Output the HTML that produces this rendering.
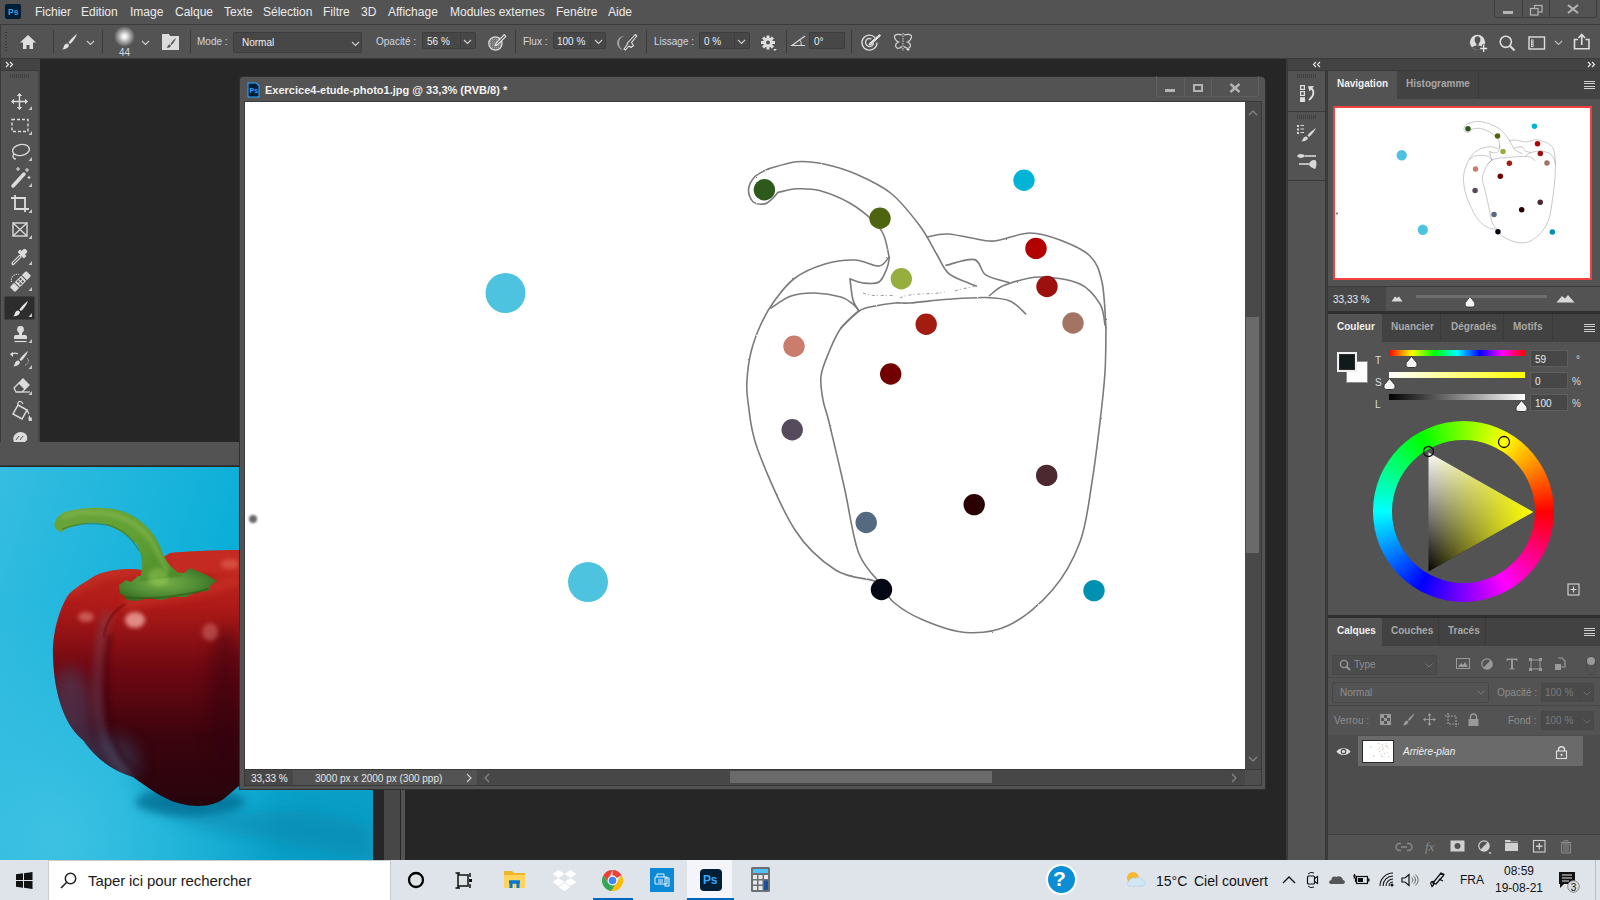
<!DOCTYPE html>
<html><head><meta charset="utf-8">
<style>
*{box-sizing:border-box;margin:0;padding:0}
html,body{width:1600px;height:900px;overflow:hidden;background:#262626;font-family:"Liberation Sans",sans-serif;}
.a{position:absolute}
.t{position:absolute;white-space:nowrap;line-height:1}
#menu{left:0;top:0;width:1600px;height:24px;background:#535353}
#menu .t{font-size:12px;color:#ececec;top:6px}
#opt{left:0;top:24px;width:1600px;height:35px;background:#535353;border-top:1px solid #3b3b3b;border-bottom:1px solid #3b3b3b;box-shadow:inset 1px 0 0 #3f3f3f}
.sep{position:absolute;width:1px;background:#3a3a3a}
.lbl{font-size:10px;color:#d2d8e0}
.box{position:absolute;background:#474747;border:1px solid #3d3d3d;border-radius:2px}
.ico{position:absolute;overflow:visible}
</style></head><body>
<!--SYM--><svg width="0" height="0" style="position:absolute"><defs>
<filter id="rough" x="-5%" y="-5%" width="110%" height="110%"><feTurbulence type="fractalNoise" baseFrequency="0.8" numOctaves="2" seed="3"/><feDisplacementMap in="SourceGraphic" scale="1.6"/></filter>
<filter id="dotbl" x="-100%" y="-100%" width="300%" height="300%"><feGaussianBlur stdDeviation="1.2"/></filter>
<symbol id="art" viewBox="0 0 1000 667">
<g fill="none" stroke="#5a5a5a" stroke-width="1.6" stroke-linecap="round" opacity=".8" filter="url(#rough)">
<path d="M523.4 66.9C528.1 65.7 542.3 60.5 551.7 59.7C561.1 58.9 569.9 60.1 580.0 62.2C590.1 64.3 601.2 67.7 612.2 72.6C623.2 77.5 635.8 83.0 646.2 91.5C656.6 100.0 667.0 113.5 674.6 123.6C682.2 133.7 686.9 144.1 691.6 152.0C696.3 159.9 698.0 166.2 703.0 170.9C708.0 175.6 717.1 178.1 721.8 180.3C726.5 182.5 729.7 183.4 731.3 184.0"/>
<path d="M523.4 66.9C521.2 68.2 513.3 71.0 510.0 74.5C506.7 78.0 503.8 83.5 503.5 87.7C503.2 92.0 505.5 97.6 508.2 100.0C510.9 102.4 516.5 102.4 519.6 101.9C522.7 101.4 524.8 98.9 527.0 97.0C529.2 95.1 531.8 91.6 532.8 90.5"/>
<path d="M532.8 90.5C535.9 89.9 544.8 87.1 551.7 86.8C558.6 86.5 565.6 86.2 574.4 88.6C583.2 91.0 595.8 96.1 604.6 101.0C613.4 105.9 621.6 112.7 627.3 118.0C633.0 123.3 635.9 126.7 638.7 133.0C641.5 139.3 643.4 152.0 644.3 155.8"/>
<path d="M644.0 155.0C642.3 156.5 639.7 163.5 634.0 164.0C628.3 164.5 619.0 158.3 610.0 158.0C601.0 157.7 590.0 159.0 580.0 162.0C570.0 165.0 558.3 170.0 550.0 176.0C541.7 182.0 535.7 190.3 530.0 198.0C524.3 205.7 520.0 213.3 516.0 222.0C512.0 230.7 508.3 240.7 506.0 250.0C503.7 259.3 502.5 269.7 502.0 278.0C501.5 286.3 501.2 288.5 503.0 300.0C504.8 311.5 504.7 325.7 512.5 347.0C520.3 368.3 537.0 407.8 550.0 428.0C563.0 448.2 577.5 459.6 590.5 468.0C603.5 476.4 620.3 476.0 628.0 478.5C635.7 481.0 635.3 482.2 636.8 483.0"/>
<path d="M605.0 177.0C607.2 177.7 613.2 180.5 618.0 181.0C622.8 181.5 630.0 182.5 634.0 180.0C638.0 177.5 640.3 170.0 642.0 166.0C643.7 162.0 643.9 157.5 644.3 155.8"/>
<path d="M605.0 177.0C605.5 180.5 606.5 192.7 608.0 198.0C609.5 203.3 613.0 207.2 614.0 209.0"/>
<path d="M526.0 206.0C529.3 204.0 538.7 196.5 546.0 194.0C553.3 191.5 561.7 190.8 570.0 191.0C578.3 191.2 589.7 193.2 596.0 195.0C602.3 196.8 605.0 199.7 608.0 202.0C611.0 204.3 613.0 207.8 614.0 209.0"/>
<path d="M596.0 226.0C599.0 223.2 608.3 212.7 614.0 209.0C619.7 205.3 624.0 205.3 630.0 204.0C636.0 202.7 644.2 201.5 650.0 201.0C655.8 200.5 656.2 201.6 665.0 201.0C673.8 200.4 690.4 198.2 703.0 197.3C715.6 196.4 730.4 195.2 740.7 195.5C751.0 195.8 758.3 196.2 765.0 199.0C771.7 201.8 778.2 209.8 780.8 212.0"/>
<path d="M701.0 163.3C705.7 162.4 722.8 156.0 729.4 157.6C736.0 159.2 735.0 169.0 740.7 172.8C746.4 176.6 759.6 179.1 763.4 180.3"/>
<path d="M682.0 135.0C685.5 134.5 693.2 131.4 703.0 132.0C712.8 132.6 732.0 137.7 740.7 138.7C749.4 139.7 747.6 139.3 755.0 138.0C762.4 136.7 775.0 131.0 785.0 131.0C795.0 131.0 805.0 134.2 815.0 138.0C825.0 141.8 838.0 147.0 845.0 154.0C852.0 161.0 854.3 168.0 857.0 180.0C859.7 192.0 860.3 218.3 861.0 226.0"/>
<path d="M744.5 193.6C747.1 191.8 751.6 186.1 760.0 183.0C768.4 179.9 782.5 175.2 795.0 175.0C807.5 174.8 825.0 177.5 835.0 182.0C845.0 186.5 850.8 195.2 855.0 202.0C859.2 208.8 859.2 219.5 860.0 223.0"/>
<path d="M614.0 209.0C611.0 211.8 601.0 219.2 596.0 226.0C591.0 232.8 587.3 242.0 584.0 250.0C580.7 258.0 577.0 266.0 576.0 274.0C575.0 282.0 576.7 290.3 578.0 298.0C579.3 305.7 580.5 305.6 584.0 320.0C587.5 334.4 594.2 362.9 599.2 384.7C604.2 406.5 607.4 434.6 613.7 451.0C620.0 467.4 632.9 477.7 636.8 483.0"/>
<path d="M636.8 483.0C638.7 485.8 641.6 494.2 648.3 500.0C655.0 505.8 665.0 512.4 677.0 517.5C689.0 522.6 706.0 529.5 720.5 530.5C735.0 531.5 749.4 530.3 763.8 523.3C778.2 516.3 795.1 502.5 807.0 488.6C818.9 474.7 828.3 458.1 835.0 440.0C841.7 421.9 843.7 400.0 847.0 380.0C850.3 360.0 852.8 338.3 855.0 320.0C857.2 301.7 859.0 285.7 860.0 270.0C861.0 254.3 860.8 233.3 861.0 226.0"/>
</g>
<g fill="none" stroke="#9a9a9a" stroke-width="1" stroke-dasharray="3 2 1 3">
<path d="M618 191C630 196 640 192 650 194M655 196C665 190 690 193 700 190M710 189C718 186 725 186 731 184"/>
</g>
<circle cx="260.5" cy="191" r="20" fill="#4ec3e0"/>
<circle cx="343" cy="480" r="20" fill="#4ec3e0"/>
<circle cx="779" cy="78.2" r="10.7" fill="#00b4d6"/>
<circle cx="519.4" cy="87.8" r="10.7" fill="#2d5a1b"/>
<circle cx="635" cy="116.2" r="10.7" fill="#4f6410"/>
<circle cx="656.3" cy="176.7" r="10.7" fill="#95ae3e"/>
<circle cx="791" cy="146.4" r="10.7" fill="#b20000"/>
<circle cx="802" cy="184.5" r="10.7" fill="#9c1010"/>
<circle cx="828" cy="221" r="10.7" fill="#a37464"/>
<circle cx="681.2" cy="222.2" r="10.7" fill="#a21c10"/>
<circle cx="549" cy="244.2" r="10.7" fill="#ca7d6c"/>
<circle cx="645.7" cy="272" r="10.7" fill="#730000"/>
<circle cx="547.2" cy="327.8" r="10.7" fill="#564a5d"/>
<circle cx="801.7" cy="373.4" r="10.7" fill="#4c2830"/>
<circle cx="729.2" cy="402.6" r="10.7" fill="#2a0002"/>
<circle cx="621.2" cy="420.5" r="10.7" fill="#546a80"/>
<circle cx="636.5" cy="487.5" r="10.7" fill="#050714"/>
<circle cx="849" cy="488.6" r="10.7" fill="#0090b2"/>
<circle cx="8" cy="417" r="4" fill="#505050" opacity=".85" filter="url(#dotbl)"/>
</symbol></defs></svg><!--/SYM-->

<!-- MENU BAR -->
<div id="menu" class="a">
  <div class="a" style="left:5px;top:4px;width:16px;height:15px;background:#001e36;border-radius:2px"></div>
  <div class="t" style="left:8px;top:6.5px;font-size:9.5px;font-weight:bold;color:#31a8ff;transform:scaleX(.9);transform-origin:0 0">Ps</div>
  <div class="t" style="left:35px">Fichier</div>
  <div class="t" style="left:81px">Edition</div>
  <div class="t" style="left:130px">Image</div>
  <div class="t" style="left:175px">Calque</div>
  <div class="t" style="left:224px">Texte</div>
  <div class="t" style="left:263px">Sélection</div>
  <div class="t" style="left:323px">Filtre</div>
  <div class="t" style="left:361px">3D</div>
  <div class="t" style="left:388px">Affichage</div>
  <div class="t" style="left:450px">Modules externes</div>
  <div class="t" style="left:556px">Fenêtre</div>
  <div class="t" style="left:608px">Aide</div>
  <div class="a" style="left:1494px;top:-2px;width:103px;height:20px;border:1px solid #3e3e3e;border-radius:0 0 3px 3px"></div>
  <div class="a" style="left:1522px;top:0;width:1px;height:18px;background:#3e3e3e"></div>
  <div class="a" style="left:1549px;top:0;width:1px;height:18px;background:#3e3e3e"></div>
  <div class="a" style="left:1503px;top:11px;width:10px;height:3px;background:#b4b4b4"></div>
  <svg class="ico" style="left:1530px;top:5px" width="13" height="11"><rect x="4.5" y="0.5" width="7.5" height="6.5" fill="none" stroke="#b4b4b4" stroke-width="1.2"/><rect x="0.5" y="3.5" width="7.5" height="6.5" fill="#535353" stroke="#b4b4b4" stroke-width="1.2"/></svg>
  <svg class="ico" style="left:1567px;top:4px" width="12" height="10"><path d="M1 1L11 9M11 1L1 9" stroke="#b4b4b4" stroke-width="2"/></svg>
</div>

<!-- OPTIONS BAR -->
<div id="opt" class="a">
  <div class="a" style="left:5px;top:7px;width:2px;height:19px;background-image:repeating-linear-gradient(#3a3a3a 0 1px,transparent 1px 3px)"></div>
  <svg class="ico" style="left:19px;top:9px" width="18" height="16"><path d="M9 1L1 8.5H4V15H7.5V11H10.5V15H14V8.5H17Z" fill="#e0e0e0"/></svg>
  <div class="sep" style="left:53px;top:5px;height:23px"></div>
  <svg class="ico" style="left:61px;top:8px" width="17" height="17"><path d="M16 1C13 3 9 7 7.5 9.5L9 11C11.5 9 14.5 5 16 1Z" fill="#e0e0e0"/><path d="M6.5 10.5C4 10.5 3 12.5 2.5 14.5C2.2 15.5 1.5 16 1 16.3C4 16.5 7.5 15.5 8 12Z" fill="#e0e0e0"/></svg>
  <svg class="ico" style="left:86px;top:15px" width="9" height="6"><path d="M1 1L4.5 4.5L8 1" fill="none" stroke="#cfcfcf" stroke-width="1.1"/></svg>
  <div class="sep" style="left:102px;top:5px;height:23px"></div>
  <div class="a" style="left:114px;top:1px;width:21px;height:21px;border-radius:50%;background:radial-gradient(circle closest-side,#ffffff 0%,#e8e8e8 22%,#a8a8a8 55%,rgba(83,83,83,0) 100%)"></div>
  <div class="t" style="left:119px;top:23px;font-size:10px;color:#d0d8e4">44</div>
  <svg class="ico" style="left:141px;top:15px" width="9" height="6"><path d="M1 1L4.5 4.5L8 1" fill="none" stroke="#cfcfcf" stroke-width="1.1"/></svg>
  <svg class="ico" style="left:162px;top:8px" width="18" height="18"><path d="M0 1H7L8 3H17V17H0Z" fill="#dcdcdc"/><path d="M14 5C12 6.5 9.5 9 8.5 11L9.5 12C11 10.5 13 8 14 5Z" fill="#535353"/><path d="M8 11.5C6.5 11.5 5.8 12.5 5.5 13.8C5.3 14.5 4.8 14.8 4.5 15C6.5 15 8.5 14.5 9 12.8Z" fill="#535353"/></svg>
  <div class="sep" style="left:190px;top:5px;height:23px"></div>
  <div class="t lbl" style="left:197px;top:12px">Mode :</div>
  <div class="box" style="left:233px;top:7px;width:129px;height:21px"></div>
  <div class="t" style="left:242px;top:13px;font-size:10px;color:#f0f0f0">Normal</div>
  <svg class="ico" style="left:351px;top:16px" width="9" height="6"><path d="M1 1L4.5 4.5L8 1" fill="none" stroke="#cfcfcf" stroke-width="1.1"/></svg>

  <div class="t lbl" style="left:376px;top:12px">Opacité :</div>
  <div class="box" style="left:422px;top:7px;width:54px;height:17px"></div>
  <div class="a" style="left:460px;top:8px;width:1px;height:15px;background:#3d3d3d"></div>
  <div class="t" style="left:427px;top:12px;font-size:10px;color:#e8eef4">56 %</div>
  <svg class="ico" style="left:463px;top:14px" width="9" height="6"><path d="M1 1L4.5 4.5L8 1" fill="none" stroke="#cfcfcf" stroke-width="1.1"/></svg>
  <svg class="ico" style="left:486px;top:8px" width="21" height="19"><defs><pattern id="hatch" width="2" height="2" patternUnits="userSpaceOnUse"><rect width="2" height="2" fill="#747474"/><rect width="1" height="1" fill="#a0a0a0"/></pattern></defs><circle cx="9.4" cy="10.5" r="6.6" fill="url(#hatch)" stroke="#dadada" stroke-width="1.3"/><path d="M18.2 1.6L19.9 3.3L11.6 11.6L9.2 12.6L10.2 10.2Z" fill="#535353" stroke="#e4e4e4" stroke-width="1.2" stroke-linejoin="round"/></svg>
  <div class="sep" style="left:515px;top:5px;height:23px"></div>
  <div class="t lbl" style="left:523px;top:12px">Flux :</div>
  <div class="box" style="left:553px;top:7px;width:53px;height:17px"></div>
  <div class="a" style="left:590px;top:8px;width:1px;height:15px;background:#3d3d3d"></div>
  <div class="t" style="left:557px;top:12px;font-size:10px;color:#e8eef4">100 %</div>
  <svg class="ico" style="left:594px;top:14px" width="9" height="6"><path d="M1 1L4.5 4.5L8 1" fill="none" stroke="#cfcfcf" stroke-width="1.1"/></svg>
  <svg class="ico" style="left:617px;top:8px" width="21" height="19"><path d="M7.5 3A7.5 7.5 0 0 0 6.5 17A5 5 0 0 1 7.5 3Z" fill="#a0a0a0"/><path d="M18.3 1.5L19.8 3L14.5 9.5L16.5 12.5L14 14.5L12 13L8.5 17L7 16L10 12L10.5 10Z" fill="#535353" stroke="#e4e4e4" stroke-width="1.1" stroke-linejoin="round"/></svg>
  <div class="sep" style="left:646px;top:5px;height:23px"></div>
  <div class="t lbl" style="left:654px;top:12px">Lissage :</div>
  <div class="box" style="left:699px;top:7px;width:51px;height:17px"></div>
  <div class="a" style="left:734px;top:8px;width:1px;height:15px;background:#3d3d3d"></div>
  <div class="t" style="left:704px;top:12px;font-size:10px;color:#e8eef4">0 %</div>
  <svg class="ico" style="left:737px;top:14px" width="9" height="6"><path d="M1 1L4.5 4.5L8 1" fill="none" stroke="#cfcfcf" stroke-width="1.1"/></svg>
  <svg class="ico" style="left:760px;top:10px" width="18" height="17"><g transform="translate(8,7.5)" fill="#dedede"><circle r="4.8"/><rect x="-1.5" y="-7" width="3" height="14"/><rect x="-7" y="-1.5" width="14" height="3"/><rect x="-1.5" y="-7" width="3" height="14" transform="rotate(45)"/><rect x="-1.5" y="-7" width="3" height="14" transform="rotate(-45)"/></g><circle cx="8" cy="7.5" r="2" fill="#535353"/><path d="M13 14H17L15 16Z" fill="#dedede"/></svg>
  <div class="sep" style="left:786px;top:5px;height:23px"></div>
  <svg class="ico" style="left:791px;top:10px" width="15" height="12"><path d="M14 1L1 10.5H14" fill="none" stroke="#d8d8d8" stroke-width="1.2"/><path d="M8.5 4.5A6 6 0 0 1 10 10.5" fill="none" stroke="#d8d8d8" stroke-width="1"/></svg>
  <div class="box" style="left:809px;top:7px;width:36px;height:17px;border-radius:1px"></div>
  <div class="t" style="left:814px;top:12px;font-size:10px;color:#e8eef4">0°</div>
  <div class="sep" style="left:851px;top:5px;height:23px"></div>
  <svg class="ico" style="left:861px;top:8px" width="20" height="19"><path d="M14 4.5A7.5 7.5 0 1 0 16 9.5" fill="none" stroke="#d8d8d8" stroke-width="1.4"/><path d="M10.5 6A4 4 0 1 0 12.5 10" fill="none" stroke="#d8d8d8" stroke-width="1.4"/><path d="M18.5 1.5L19.5 2.8L10 11.5L8 12L8.8 10Z" fill="#e0e0e0" stroke="#e0e0e0"/></svg>
  <svg class="ico" style="left:893px;top:8px" width="20" height="19"><path d="M9 2C6 1 2 1 1.5 3C1 6 4 8.5 5.5 9C3 10 2 12 3 14C4 16 7 15.5 9 13.5M11 2C14 1 18 1 18.5 3C19 6 16 8.5 14.5 9C17 10 18 12 17 14C16 16 13 15.5 11 13.5" fill="none" stroke="#d8d8d8" stroke-width="1.2"/><path d="M10 0V18" stroke="#d8d8d8" stroke-width="1" stroke-dasharray="1.5 1"/><path d="M13 16H17L15 18Z" fill="#dedede"/></svg>

  <svg class="ico" style="left:1469px;top:9px" width="20" height="19"><defs><clipPath id="pc1"><circle cx="8.5" cy="8.3" r="7.6"/></clipPath></defs><circle cx="8.5" cy="8.3" r="7.6" fill="#dedede"/><g clip-path="url(#pc1)" fill="#535353"><ellipse cx="8.5" cy="5.8" rx="2.9" ry="3.6"/><rect x="7.3" y="8" width="2.4" height="3.5"/><ellipse cx="8.5" cy="14.8" rx="6" ry="3.2"/></g><path d="M14.7 10.5V18.5M10.7 14.5H18.7" stroke="#535353" stroke-width="3.6"/><path d="M14.7 11V18M11.2 14.5H18.2" stroke="#e8e8e8" stroke-width="1.3"/></svg>
  <svg class="ico" style="left:1499px;top:10px" width="17" height="17"><circle cx="6.8" cy="6.8" r="5.6" fill="none" stroke="#dedede" stroke-width="1.6"/><path d="M10.8 10.8L15.5 15.5" stroke="#dedede" stroke-width="2"/></svg>
  <svg class="ico" style="left:1528px;top:11px" width="18" height="14"><rect x="1" y="1" width="15.5" height="12" fill="none" stroke="#dedede" stroke-width="1.4"/><rect x="3" y="3.5" width="2.5" height="7.5" fill="#dedede"/><rect x="3.7" y="4.3" width="1.1" height="1.1" fill="#535353"/><rect x="3.7" y="6.6" width="1.1" height="1.1" fill="#535353"/><rect x="3.7" y="8.9" width="1.1" height="1.1" fill="#535353"/></svg>
  <svg class="ico" style="left:1554px;top:15px" width="9" height="6"><path d="M1 1L4.5 4.5L8 1" fill="none" stroke="#bdbdbd" stroke-width="1.1"/></svg>
  <svg class="ico" style="left:1573px;top:8px" width="18" height="17"><path d="M5 6.5H1.5V15.8H16V6.5H12.5" fill="none" stroke="#dedede" stroke-width="1.6"/><path d="M8.75 12V2M5.5 5L8.75 1.5L12 5" fill="none" stroke="#dedede" stroke-width="1.6"/></svg>
</div>

<!-- PHOTO WINDOW -->
<div class="a" style="left:0;top:442px;width:405px;height:418px;background:#262626"></div>
<div class="a" style="left:0;top:442px;width:405px;height:24px;background:#535353;border-bottom:1px solid #3a3a3a"></div>
<div class="a" style="left:384px;top:466px;width:16px;height:394px;background:#474747"></div>
<div class="a" style="left:401px;top:466px;width:4px;height:394px;background:#535353"></div>
<svg class="a" style="left:0;top:467px" width="373" height="393">
 <defs>
  <linearGradient id="bg1" x1="0" y1="0" x2="1" y2="0.35"><stop offset="0" stop-color="#36bde1"/><stop offset=".6" stop-color="#0cafd8"/><stop offset="1" stop-color="#089ec6"/></linearGradient>
  <radialGradient id="bg2" cx=".15" cy=".95" r=".6"><stop offset="0" stop-color="#42c3e3" stop-opacity=".9"/><stop offset="1" stop-color="#42c3e3" stop-opacity="0"/></radialGradient>
  <filter id="bl8" x="-50%" y="-50%" width="200%" height="200%"><feGaussianBlur stdDeviation="8"/></filter>
  <filter id="bl4" x="-50%" y="-50%" width="200%" height="200%"><feGaussianBlur stdDeviation="4"/></filter>
  <filter id="bl2" x="-50%" y="-50%" width="200%" height="200%"><feGaussianBlur stdDeviation="2"/></filter>
  <filter id="bl1" x="-50%" y="-50%" width="200%" height="200%"><feGaussianBlur stdDeviation="0.7"/></filter>
  <linearGradient id="pep" x1="0" y1="0" x2="0" y2="1"><stop offset="0" stop-color="#c62a20"/><stop offset=".22" stop-color="#ae1a18"/><stop offset=".45" stop-color="#700812"/><stop offset=".7" stop-color="#3c040e"/><stop offset="1" stop-color="#24040c"/></linearGradient>
  <linearGradient id="stg" x1="0" y1="0" x2="1" y2="1"><stop offset="0" stop-color="#6aa43a"/><stop offset=".5" stop-color="#62a034"/><stop offset="1" stop-color="#4a8a2a"/></linearGradient>
  <clipPath id="pc"><path d="M69 127C60 140 52 165 53 190C54 225 64 258 83 273C95 290 110 303 133 310C150 322 165 333 178 336C195 341 215 340 226 330L240 318V83C220 83 190 84 170 86C160 92 150 100 141 103C125 100 100 104 90 112C80 118 74 122 69 127Z"/></clipPath>
 </defs>
 <rect width="373" height="393" fill="url(#bg1)"/>
 <rect width="373" height="393" fill="url(#bg2)"/>
 <path d="M130 300C170 330 220 350 260 345C300 340 340 350 373 360V393H373C320 385 250 370 200 360C170 352 140 330 130 300Z" fill="#0a86ad" opacity=".55" filter="url(#bl8)"/>
 <ellipse cx="190" cy="335" rx="55" ry="14" fill="#06688c" opacity=".7" filter="url(#bl4)"/>
 <g clip-path="url(#pc)">
  <rect x="40" y="80" width="210" height="270" fill="url(#pep)"/>
  <ellipse cx="70" cy="262" rx="24" ry="62" fill="#4a4a6c" opacity=".55" filter="url(#bl8)"/>
  <ellipse cx="108" cy="295" rx="32" ry="28" fill="#3a3c5c" opacity=".6" filter="url(#bl8)"/>
  <path d="M114 145C104 175 102 212 105 245C108 275 118 295 136 308" fill="none" stroke="#6a7898" stroke-width="6" opacity=".4" filter="url(#bl4)" transform="translate(-6 0)"/>
  <path d="M110 168C106 195 105 220 108 242C110 272 120 292 136 306" fill="none" stroke="#30040e" stroke-width="5" opacity=".4" filter="url(#bl2)"/><path d="M104 170C106 155 114 142 126 137" fill="none" stroke="#6a0a0e" stroke-width="3" opacity=".45" filter="url(#bl1)"/>
  <path d="M124 137C150 130 200 128 240 112" fill="none" stroke="#d03a2e" stroke-width="10" opacity=".55" filter="url(#bl4)"/>
  <path d="M70 127C85 112 110 102 141 103" fill="none" stroke="#c83a2c" stroke-width="10" opacity=".6" filter="url(#bl4)"/>
  <path d="M170 86C190 83 220 83 240 83V108C220 104 195 104 172 108Z" fill="#c42a20" filter="url(#bl2)"/>
  <ellipse cx="226" cy="232" rx="18" ry="70" fill="#2a0410" opacity=".4" filter="url(#bl8)"/>
 </g>
 <ellipse cx="135" cy="153" rx="10" ry="8" fill="#ffbcb4" opacity=".7" filter="url(#bl2)"/>
 <ellipse cx="86" cy="150" rx="8" ry="5" fill="#f09a90" opacity=".5" filter="url(#bl2)"/>
 <ellipse cx="210" cy="165" rx="8" ry="9" fill="#e89088" opacity=".4" filter="url(#bl2)"/>
 <ellipse cx="230" cy="97" rx="9" ry="5" fill="#f07a6a" opacity=".45" filter="url(#bl2)"/>
 <radialGradient id="calg" cx=".45" cy=".45" r=".6"><stop offset="0" stop-color="#78b048"/><stop offset=".6" stop-color="#4f8c34"/><stop offset="1" stop-color="#356a22"/></radialGradient><path d="M119 118L126 113L131 115L138 109L150 108L160 104L184 106L190 101L197 104L207 108L217 114L211 118L208 124L196 125L186 130L172 130L162 133L148 131L136 134L127 133L124 128L120 127Z" fill="url(#calg)" filter="url(#bl1)"/>
 <path d="M124 130C140 132 165 131 180 128C195 126 205 123 208 122" fill="none" stroke="#2f5a18" stroke-width="2" opacity=".6" filter="url(#bl1)"/>
 <path d="M54.4 57C56 50 62 45 69 44C80 41 95 39.5 112 41.7C125 43.5 138 50 147 60C155 68 160 77 163 87C167 96 172 102 183 109L139.6 114.6C142 105 142.5 98 141 88.6C139 80 136 74 134 75.6C128 68 121 64 105 57C95 55 85 55 66 62C63 64 62 65 61.7 64.8C57 64 54 61 54.4 57Z" fill="url(#stg)" filter="url(#bl1)"/>
 <path d="M62 50C72 45 90 44 110 47C128 51 142 60 152 75C158 85 162 95 168 104" fill="none" stroke="#a2cc66" stroke-width="3" opacity=".55" filter="url(#bl2)"/>
 <path d="M62 62C75 57 92 55 108 58C122 62 133 72 139 84" fill="none" stroke="#3a6a1e" stroke-width="1.5" opacity=".5" filter="url(#bl1)"/>
 <ellipse cx="158" cy="110" rx="10" ry="9" fill="#9ccc5a" opacity=".45" filter="url(#bl2)"/>
</svg>

<!-- DOC WINDOW -->
<div class="a" style="left:240px;top:77px;width:1025px;height:712px;background:#535353;border-radius:3px 4px 0 0;box-shadow:0 0 0 1px #2f2f2f"></div>
<div class="a" style="left:244px;top:101px;width:1018px;height:685px;background:#393939"></div>
<svg class="ico" style="left:247px;top:82px" width="13" height="16"><path d="M0.5 0.5H9.5L12.5 3.5V15.5H0.5Z" fill="#31a8ff"/><path d="M1.5 2.5Q1.5 1.5 2.5 1.5H9L11.5 4V13.5Q11.5 14.5 10.5 14.5H2.5Q1.5 14.5 1.5 13.5Z" fill="#001e36"/><text x="2.5" y="10.5" font-family="Liberation Sans" font-size="7" font-weight="bold" fill="#31a8ff">Ps</text></svg>
<div class="t" style="left:265px;top:85px;font-size:11px;font-weight:bold;color:#f2f2f2">Exercice4-etude-photo1.jpg @ 33,3% (RVB/8) *</div>
<div class="a" style="left:1156px;top:76px;width:103px;height:21px;border:1px solid #606060;border-top:none;border-radius:0 0 3px 3px"></div>
<div class="a" style="left:1184px;top:78px;width:1px;height:18px;background:#606060"></div>
<div class="a" style="left:1211px;top:78px;width:1px;height:18px;background:#606060"></div>
<div class="a" style="left:1165px;top:89px;width:10px;height:3px;background:#b4b4b4"></div>
<div class="a" style="left:1193px;top:84px;width:10px;height:8px;border:2px solid #b4b4b4"></div>
<svg class="ico" style="left:1229px;top:83px" width="12" height="10"><path d="M1.5 1L10.5 9M10.5 1L1.5 9" stroke="#b4b4b4" stroke-width="2.4"/></svg>
<div class="a" style="left:245px;top:102px;width:1000px;height:667px;background:#ffffff"></div>
<svg class="a" style="left:245px;top:102px" width="1000" height="667" viewBox="0 0 1000 667"><use href="#art"/></svg>
<div class="a" style="left:1245px;top:102px;width:16px;height:667px;background:#494949"></div>
<div class="a" style="left:1246px;top:317px;width:13px;height:236px;background:#6a6a6a"></div>
<svg class="ico" style="left:1248px;top:110px" width="10" height="6"><path d="M1 5L5 1L9 5" fill="none" stroke="#8a8a8a" stroke-width="1.1"/></svg>
<svg class="ico" style="left:1248px;top:756px" width="10" height="6"><path d="M1 1L5 5L9 1" fill="none" stroke="#8a8a8a" stroke-width="1.1"/></svg>
<div class="a" style="left:245px;top:770px;width:1000px;height:15px;background:#474747"></div>
<div class="a" style="left:293px;top:770px;width:184px;height:15px;background:#535353"></div>
<div class="t" style="left:251px;top:774px;font-size:10px;color:#f0f0f0">33,33 %</div>
<div class="t" style="left:315px;top:774px;font-size:10px;color:#e6e6e6">3000 px x 2000 px (300 ppp)</div>
<svg class="ico" style="left:466px;top:773px" width="6" height="10"><path d="M1 1L5 5L1 9" fill="none" stroke="#d0d0d0" stroke-width="1.1"/></svg>
<svg class="ico" style="left:484px;top:773px" width="6" height="10"><path d="M5 1L1 5L5 9" fill="none" stroke="#8a8a8a" stroke-width="1.1"/></svg>
<div class="a" style="left:730px;top:771px;width:262px;height:12px;background:#6a6a6a"></div>
<svg class="ico" style="left:1231px;top:773px" width="6" height="10"><path d="M1 1L5 5L1 9" fill="none" stroke="#8a8a8a" stroke-width="1.1"/></svg>
<div class="a" style="left:1245px;top:770px;width:16px;height:15px;background:#4e4e4e"></div>

<!-- LEFT TOOLBAR -->
<div class="a" style="left:0;top:59px;width:40px;height:383px;background:#3a3a3a"></div><div class="a" style="left:38px;top:59px;width:2px;height:383px;background:#444"></div>
<div class="a" style="left:1px;top:59px;width:37px;height:11px;background:#434343"></div>
<svg class="ico" style="left:5px;top:61px" width="10" height="7"><path d="M1 1L3.5 3.5L1 6M5 1L7.5 3.5L5 6" fill="none" stroke="#e8e8e8" stroke-width="1.2"/></svg>
<div class="a" style="left:1px;top:71px;width:37px;height:371px;background:#535353"></div>
<div class="a" style="left:10px;top:74px;width:19px;height:4px;background-image:repeating-linear-gradient(90deg,#414141 0 1px,transparent 1px 2px)"></div>
<div class="a" style="left:4px;top:296px;width:31px;height:24px;background:#2d2d2d;border:1px solid #3f3f3f;border-radius:2px"></div>
<svg class="a" style="left:0;top:80px" width="40" height="362">
 <g fill="#d8d8d8">
  <path d="M28.5 30L32 26V30ZM28.5 55L32 51V55ZM28.5 81L32 77V81ZM28.5 107L32 103V107ZM28.5 133L32 129V133ZM28.5 159L32 155V159ZM28.5 185L32 181V185ZM28.5 211L32 207V211ZM28.5 237L32 233V237ZM28.5 263L32 259V263ZM28.5 289L32 285V289ZM28.5 315L32 311V315ZM28.5 341L32 337V341Z" fill="#c8c8c8"/>
 </g>
 <!-- move -->
 <g stroke="#dcdcdc" stroke-width="1.4" fill="none"><path d="M19.5 14.5V28.5M12.5 21.5H26.5"/></g>
 <path d="M19.5 13L16.8 16H22.2Z M19.5 30L16.8 27H22.2Z M11 21.5L14 18.8V24.2Z M28 21.5L25 18.8V24.2Z" fill="#dcdcdc"/>
 <!-- marquee -->
 <rect x="12" y="39.5" width="16" height="12" fill="none" stroke="#dcdcdc" stroke-width="1.4" stroke-dasharray="3 2"/>
 <!-- lasso -->
 <ellipse cx="21" cy="70" rx="8.5" ry="5.5" fill="none" stroke="#dcdcdc" stroke-width="1.4" transform="rotate(-10 21 70)"/>
 <path d="M14 74C12 76 13 79 16 79" fill="none" stroke="#dcdcdc" stroke-width="1.3"/>
 <!-- magic wand -->
 <path d="M13 106L24 94" stroke="#dcdcdc" stroke-width="3.5" stroke-linecap="round"/>
 <path d="M18 87V91M16 89H20M27 88V92M25 90H29M29 96V99M27.5 97.5H30.5" stroke="#dcdcdc" stroke-width="1.1"/>
 <!-- crop -->
 <path d="M15 115V129H29M11 118H25V132" fill="none" stroke="#dcdcdc" stroke-width="1.8"/>
 <!-- frame -->
 <rect x="13" y="143" width="14" height="13" fill="none" stroke="#dcdcdc" stroke-width="1.4"/><path d="M13 143L27 156M27 143L13 156" stroke="#dcdcdc" stroke-width="1.2"/>
 <!-- eyedropper -->
 <path d="M13 183.5L20 176.5" stroke="#dcdcdc" stroke-width="3.2" stroke-linecap="round"/><path d="M13.3 183.2L19.8 176.7" stroke="#535353" stroke-width="1.1" stroke-linecap="round"/>
 <g transform="translate(22 174) rotate(45)"><rect x="-4.5" y="-1.8" width="9" height="3.6" fill="#dcdcdc"/><rect x="-2.5" y="-6" width="5" height="6" rx="2" fill="#dcdcdc"/></g>
 <!-- healing -->
 <g transform="translate(20.5 201.5) rotate(-45)"><rect x="-11.5" y="-3.6" width="23" height="7.2" rx="1.2" fill="#dcdcdc"/><path d="M-5 -4V4M5 -4V4" stroke="#535353" stroke-width="1"/><rect x="-2.6" y="-2.6" width="2" height="2" fill="#535353"/><rect x="0.6" y="-2.6" width="2" height="2" fill="#535353"/><rect x="-2.6" y="0.6" width="2" height="2" fill="#535353"/><rect x="0.6" y="0.6" width="2" height="2" fill="#535353"/></g>
 <path d="M11.5 202A6 6 0 0 1 19 194.5" fill="none" stroke="#dcdcdc" stroke-width="1.2" stroke-dasharray="1.1 1.3"/>
 <!-- brush -->
 <path d="M28 221C25 223 21 227 19.5 229.5L21 231C23.5 229 26.5 225 28 221Z" fill="#e6e6e6"/><path d="M18.5 230.5C16 230.5 15 232.5 14.5 234.5C14.2 235.5 13.5 236 13 236.3C16 236.5 19.5 235.5 20 232Z" fill="#e6e6e6"/>
 <!-- stamp -->
 <circle cx="20.5" cy="249.5" r="3.4" fill="#dcdcdc"/><path d="M19 252V255H15.5C14.5 255 14 256 14 257V259H27V257C27 256 26.5 255 25.5 255H22V252Z" fill="#dcdcdc"/><path d="M14.5 261.5H26.5" stroke="#dcdcdc" stroke-width="1.2"/>
 <!-- history brush -->
 <path d="M28 271C25 273 21 277 19.5 279.5L21 281C23.5 279 26.5 275 28 271Z" fill="#dcdcdc"/><path d="M18.5 280.5C16 280.5 15 282.5 14.5 284.5C14.2 285.5 13.5 286 13 286.3C16 286.5 19.5 285.5 20 282Z" fill="#dcdcdc"/>
 <path d="M11 275C13 273 16 273 18 274" fill="none" stroke="#dcdcdc" stroke-width="1.3"/><path d="M10 274L13 272V277Z" fill="#dcdcdc"/>
 <path d="M27 278A4 4 0 0 1 25 285" fill="none" stroke="#dcdcdc" stroke-width="1" stroke-dasharray="1 1"/>
 <!-- eraser -->
 <g transform="translate(2 1)"><path d="M12 307L21 298L27 304L20 311H14Z" fill="none" stroke="#dcdcdc" stroke-width="1.3"/><path d="M16.5 302.5L21 298L27 304L22.5 308.5Z" fill="#dcdcdc"/><path d="M20 311H28" stroke="#dcdcdc" stroke-width="1.2"/></g>
 <!-- bucket -->
 <g transform="translate(5 2)"><path d="M13 323L22 328L17 337L8 332Z" fill="none" stroke="#dcdcdc" stroke-width="1.5"/><path d="M13 323C12 319 16 318 18 322" fill="none" stroke="#dcdcdc" stroke-width="1.2"/><path d="M22 328L24 332" stroke="#dcdcdc" stroke-width="1.2"/><path d="M24 333C24 335 23 337 23.5 338C24.5 339 26.5 338 26 336Z" fill="#dcdcdc"/></g>
 <!-- smudge partial -->
 <path d="M14 362C12 358 14 353 20 352C26 352 28 356 27 360L25 362Z" fill="#dcdcdc"/><path d="M16 360L19 356M20 360L23 356" stroke="#535353" stroke-width="1"/>
 </svg>

<!-- RIGHT DOCK -->
<div class="a" style="left:1286px;top:59px;width:314px;height:801px;background:#3a3a3a"></div>
<div class="a" style="left:1288px;top:59px;width:312px;height:11px;background:#434343"></div>
<svg class="ico" style="left:1312px;top:61px" width="10" height="7"><path d="M4 1L1.5 3.5L4 6M8 1L5.5 3.5L8 6" fill="none" stroke="#e8e8e8" stroke-width="1.2"/></svg>
<svg class="ico" style="left:1587px;top:61px" width="10" height="7"><path d="M1 1L3.5 3.5L1 6M5 1L7.5 3.5L5 6" fill="none" stroke="#e8e8e8" stroke-width="1.2"/></svg>
<!-- narrow column -->
<div class="a" style="left:1288px;top:71px;width:37px;height:789px;background:#535353"></div>
<div class="a" style="left:1288px;top:111px;width:38px;height:1px;background:#3a3a3a"></div>
<div class="a" style="left:1288px;top:180px;width:38px;height:1px;background:#3a3a3a"></div>
<div class="a" style="left:1297px;top:74px;width:19px;height:4px;background-image:repeating-linear-gradient(90deg,#414141 0 1px,transparent 1px 2px)"></div>
<div class="a" style="left:1297px;top:115px;width:19px;height:4px;background-image:repeating-linear-gradient(90deg,#414141 0 1px,transparent 1px 2px)"></div>
<svg class="ico" style="left:1299px;top:84px" width="17" height="19"><rect x="1.6" y="1.6" width="3.8" height="3.8" fill="none" stroke="#e0e0e0" stroke-width="1.2"/><rect x="1.6" y="7.6" width="3.8" height="3.8" fill="none" stroke="#e0e0e0" stroke-width="1.2"/><rect x="1" y="13.2" width="5" height="4.8" fill="#e0e0e0"/><path d="M9 2.2L15 2L10.5 7.5Z" fill="#e0e0e0"/><path d="M12 4C15.5 6.5 15.5 12 10 16" fill="none" stroke="#e0e0e0" stroke-width="1.8"/></svg>
<svg class="ico" style="left:1296px;top:124px" width="22" height="18"><path d="M1 1h2v2H1zM1 4.5h2v2H1zM1 8h2v2H1z" fill="#d8d8d8"/><path d="M4.5 1.5H8M4.5 5H8M4.5 8.5H8" stroke="#d8d8d8" stroke-width="1"/><path d="M20 4C17 6 13 9 11.5 11.5L13 13C15.5 11 18.5 7 20 4Z" fill="#d8d8d8"/><path d="M10.5 12.5C8 12.5 7 14.5 6.5 16C6.2 16.8 5.5 17 5 17.3C8 17.5 11.5 16.5 12 14Z" fill="#d8d8d8"/></svg>
<svg class="ico" style="left:1296px;top:152px" width="22" height="18"><path d="M1 4C3 1 8 2 9 4C8 6 3 7 1 4Z" fill="#d8d8d8"/><path d="M9 4H20" stroke="#d8d8d8" stroke-width="1.6"/><path d="M3 12H13" stroke="#d8d8d8" stroke-width="1.6"/><path d="M13 12C14 8 19 7 20 9C21 12 20 16 19 17C16 16 13 14 13 12Z" fill="#d8d8d8"/></svg>

<!-- main column -->
<div class="a" style="left:1328px;top:71px;width:272px;height:789px;background:#535353"></div>
<!-- Navigation -->
<div class="a" style="left:1328px;top:71px;width:272px;height:28px;background:#424242"></div>
<div class="a" style="left:1328px;top:71px;width:69px;height:28px;background:#535353"></div>
<div class="a" style="left:1478px;top:71px;width:1px;height:27px;background:#3a3a3a"></div>
<div class="t" style="left:1337px;top:79px;font-size:10px;font-weight:bold;color:#f0f0f0">Navigation</div>
<div class="t" style="left:1406px;top:79px;font-size:10px;font-weight:bold;color:#a8a8a8">Histogramme</div>
<div class="a" style="left:1584px;top:81px;width:11px;height:8px;background-image:repeating-linear-gradient(#cfcfcf 0 1px,transparent 1px 2.34px)"></div>
<div class="a" style="left:1333px;top:106px;width:259px;height:174px;background:#fff;border:2px solid #f04040"></div>
<svg class="a" style="left:1335px;top:106px" width="256" height="172" viewBox="0 0 1000 667" preserveAspectRatio="none"><use href="#art"/></svg>
<div class="a" style="left:1328px;top:286px;width:272px;height:1px;background:#3a3a3a"></div>
<div class="a" style="left:1328px;top:287px;width:58px;height:24px;background:#474747"></div>
<div class="t" style="left:1333px;top:295px;font-size:10px;color:#e8eef4">33,33 %</div>
<svg class="ico" style="left:1391px;top:295px" width="12" height="7"><path d="M0.5 6.5L4 1.5L6 3L8 1.5L11.5 6.5Z" fill="#d8d8d8"/></svg>
<div class="a" style="left:1416px;top:295px;width:131px;height:3px;background:#6e6e6e"></div>
<svg class="ico" style="left:1464px;top:296px" width="12" height="12"><path d="M6 0.5L10.5 6.5C11.5 8.5 10.5 11 8 11H4C1.5 11 0.5 8.5 1.5 6.5Z" fill="#f4f4f4" stroke="#333" stroke-width=".8"/></svg>
<svg class="ico" style="left:1556px;top:294px" width="19" height="9"><path d="M0.5 8.5L6 2L9 4.5L12 1L18.5 8.5Z" fill="#d8d8d8"/></svg>
<div class="a" style="left:1328px;top:311px;width:272px;height:3px;background:#2f2f2f"></div>

<!-- Couleur -->
<div class="a" style="left:1328px;top:314px;width:272px;height:28px;background:#424242"></div>
<div class="a" style="left:1328px;top:314px;width:54px;height:28px;background:#535353"></div>
<div class="a" style="left:1440px;top:314px;width:1px;height:27px;background:#3a3a3a"></div>
<div class="a" style="left:1503px;top:314px;width:1px;height:27px;background:#3a3a3a"></div>
<div class="a" style="left:1552px;top:314px;width:1px;height:27px;background:#3a3a3a"></div>
<div class="t" style="left:1337px;top:322px;font-size:10px;font-weight:bold;color:#f0f0f0">Couleur</div>
<div class="t" style="left:1391px;top:322px;font-size:10px;font-weight:bold;color:#a8a8a8">Nuancier</div>
<div class="t" style="left:1451px;top:322px;font-size:10px;font-weight:bold;color:#a8a8a8">Dégradés</div>
<div class="t" style="left:1513px;top:322px;font-size:10px;font-weight:bold;color:#a8a8a8">Motifs</div>
<div class="a" style="left:1584px;top:324px;width:11px;height:8px;background-image:repeating-linear-gradient(#cfcfcf 0 1px,transparent 1px 2.34px)"></div>
<div class="a" style="left:1346px;top:361px;width:22px;height:22px;background:#fff;border:1px solid #8c8c8c;box-shadow:inset 0 0 0 1px #fff"></div>
<div class="a" style="left:1337px;top:352px;width:20px;height:20px;background:#111a1a;border:2px solid #f0f0f0;box-shadow:inset 0 0 0 1px #2a2a2a"></div>
<div class="t" style="left:1375px;top:356px;font-size:10px;color:#d8dee6">T</div>
<div class="t" style="left:1375px;top:378px;font-size:10px;color:#d8dee6">S</div>
<div class="t" style="left:1375px;top:400px;font-size:10px;color:#d8dee6">L</div>
<div class="a" style="left:1389px;top:350px;width:136px;height:6px;background:linear-gradient(90deg,#ff0000,#ffff00 16.7%,#00ff00 33.3%,#00ffff 50%,#0000ff 66.7%,#ff00ff 83.3%,#ff0000)"></div>
<div class="a" style="left:1389px;top:372px;width:136px;height:6px;background:linear-gradient(90deg,#ffffff,#ffff00)"></div>
<div class="a" style="left:1389px;top:394px;width:136px;height:6px;background:linear-gradient(90deg,#000000,#ffffff)"></div>
<svg class="ico" style="left:1405px;top:356px" width="13" height="12"><path d="M6.5 0.5L11.5 6.5C12.8 9.5 11.5 11.5 9 11.5H4C1.5 11.5 0.2 9.5 1.5 6.5Z" fill="#f4f4f4" stroke="#2a2a2a" stroke-width=".9"/></svg>
<svg class="ico" style="left:1383px;top:378px" width="13" height="12"><path d="M6.5 0.5L11.5 6.5C12.8 9.5 11.5 11.5 9 11.5H4C1.5 11.5 0.2 9.5 1.5 6.5Z" fill="#f4f4f4" stroke="#2a2a2a" stroke-width=".9"/></svg>
<svg class="ico" style="left:1515px;top:400px" width="13" height="12"><path d="M6.5 0.5L11.5 6.5C12.8 9.5 11.5 11.5 9 11.5H4C1.5 11.5 0.2 9.5 1.5 6.5Z" fill="#f4f4f4" stroke="#2a2a2a" stroke-width=".9"/></svg>
<div class="box" style="left:1530px;top:350px;width:38px;height:17px;border-radius:0;background:#474747;border-color:#5e5e5e"></div>
<div class="box" style="left:1530px;top:372px;width:38px;height:17px;border-radius:0;background:#474747;border-color:#5e5e5e"></div>
<div class="box" style="left:1530px;top:394px;width:38px;height:17px;border-radius:0;background:#474747;border-color:#5e5e5e"></div>
<div class="t" style="left:1535px;top:355px;font-size:10px;color:#e8eef4">59</div>
<div class="t" style="left:1535px;top:377px;font-size:10px;color:#e8eef4">0</div>
<div class="t" style="left:1535px;top:399px;font-size:10px;color:#e8eef4">100</div>
<div class="t" style="left:1576px;top:355px;font-size:10px;color:#d8d8d8">°</div>
<div class="t" style="left:1572px;top:377px;font-size:10px;color:#d8d8d8">%</div>
<div class="t" style="left:1572px;top:399px;font-size:10px;color:#d8d8d8">%</div>
<!-- wheel -->
<div class="a" style="left:1373px;top:421px;width:181px;height:181px;border-radius:50%;background:conic-gradient(from 90deg,#ff0000,#ff00ff 60deg,#0000ff 120deg,#00ffff 180deg,#00ff00 240deg,#ffff00 300deg,#ff0000 360deg)"></div>
<div class="a" style="left:1392px;top:440px;width:143px;height:143px;border-radius:50%;background:#535353"></div>
<svg class="a" style="left:1373px;top:421px" width="181" height="181">
 <defs>
  <linearGradient id="tri1" x1="55.5" y1="0" x2="160.5" y2="0" gradientUnits="userSpaceOnUse"><stop offset="0" stop-color="#ffff00" stop-opacity="0"/><stop offset="1" stop-color="#ffff00"/></linearGradient>
  <linearGradient id="tri2" x1="0" y1="0" x2="0" y2="1"><stop offset="0" stop-color="#fff"/><stop offset="1" stop-color="#000"/></linearGradient>
  <clipPath id="tc"><path d="M55.5 31.5L55.5 150.5L160.5 91Z"/></clipPath>
 </defs>
 <g clip-path="url(#tc)">
  <rect x="55" y="31" width="106" height="120" fill="url(#tri2)"/>
  <path d="M55.5 31.5L55.5 150.5L160.5 91Z" fill="url(#tri1)"/>
 </g>
 <circle cx="55.5" cy="30.5" r="5" fill="none" stroke="#111" stroke-width="1.3"/>
 <circle cx="131" cy="21" r="5.5" fill="none" stroke="#111" stroke-width="1.3"/>
</svg>
<svg class="ico" style="left:1567px;top:583px" width="13" height="13"><rect x="1" y="1" width="11" height="11" fill="none" stroke="#d8d8d8" stroke-width="1.1"/><path d="M6.5 3.5V9.5M3.5 6.5H9.5" stroke="#d8d8d8" stroke-width="1.1"/></svg>
<div class="a" style="left:1328px;top:615px;width:272px;height:3px;background:#2f2f2f"></div>

<!-- Calques -->
<div class="a" style="left:1328px;top:618px;width:272px;height:28px;background:#424242"></div>
<div class="a" style="left:1328px;top:618px;width:54px;height:28px;background:#535353"></div>
<div class="a" style="left:1438px;top:618px;width:1px;height:27px;background:#3a3a3a"></div>
<div class="a" style="left:1485px;top:618px;width:1px;height:27px;background:#3a3a3a"></div>
<div class="t" style="left:1337px;top:626px;font-size:10px;font-weight:bold;color:#f0f0f0">Calques</div>
<div class="t" style="left:1391px;top:626px;font-size:10px;font-weight:bold;color:#a8a8a8">Couches</div>
<div class="t" style="left:1448px;top:626px;font-size:10px;font-weight:bold;color:#a8a8a8">Tracés</div>
<div class="a" style="left:1584px;top:628px;width:11px;height:8px;background-image:repeating-linear-gradient(#cfcfcf 0 1px,transparent 1px 2.34px)"></div>
<div class="a" style="left:1328px;top:646px;width:272px;height:32px;background:#535353"></div>
<div class="box" style="left:1332px;top:655px;width:105px;height:20px;background:#4c4c4c;border-color:#474747"></div>
<svg class="ico" style="left:1339px;top:659px" width="12" height="12"><circle cx="5" cy="5" r="3.6" fill="none" stroke="#9a9a9a" stroke-width="1.4"/><path d="M7.5 7.5L11 11" stroke="#9a9a9a" stroke-width="1.8"/></svg>
<div class="t" style="left:1354px;top:660px;font-size:10px;color:#8e8e8e">Type</div>
<svg class="ico" style="left:1425px;top:663px" width="8" height="5"><path d="M0.5 0.5L4 4L7.5 0.5" fill="none" stroke="#777" stroke-width="1"/></svg>
<svg class="ico" style="left:1456px;top:658px" width="14" height="12"><rect x="0.5" y="0.5" width="13" height="10" fill="none" stroke="#9a9a9a" stroke-width="1"/><path d="M2 9L5 5L7 7L9 4L12 9Z" fill="#9a9a9a"/></svg>
<svg class="ico" style="left:1481px;top:658px" width="12" height="12"><circle cx="6" cy="6" r="5.2" fill="none" stroke="#9a9a9a" stroke-width="1.2"/><path d="M9.7 2.3A5.2 5.2 0 0 1 2.3 9.7Z" fill="#9a9a9a"/></svg>
<svg class="ico" style="left:1506px;top:658px" width="12" height="12"><path d="M0.5 0.5H11.5V3H10.5L10 2H7V10.5H8.5V11.5H3.5V10.5H5V2H2L1.5 3H0.5Z" fill="#9a9a9a"/></svg>
<svg class="ico" style="left:1529px;top:658px" width="13" height="13"><rect x="2" y="2" width="9" height="9" fill="none" stroke="#9a9a9a" stroke-width="1"/><path d="M0 0h3v3H0zM10 0h3v3h-3zM0 10h3v3H0zM10 10h3v3h-3z" fill="#9a9a9a"/></svg>
<svg class="ico" style="left:1554px;top:657px" width="12" height="14"><path d="M4 1H8L11 4V10H7" fill="none" stroke="#9a9a9a" stroke-width="1.2"/><rect x="1" y="7" width="6" height="6" fill="#9a9a9a"/></svg>
<div class="a" style="left:1586px;top:656px;width:10px;height:19px;border:1px solid #4a4a4a;border-radius:5px"></div>
<div class="a" style="left:1587px;top:657px;width:8px;height:8px;border-radius:50%;background:#9a9a9a"></div>
<div class="a" style="left:1328px;top:677px;width:272px;height:1px;background:#454545"></div>
<div class="box" style="left:1332px;top:682px;width:157px;height:21px;background:#535353;border-color:#474747"></div>
<div class="t" style="left:1340px;top:688px;font-size:10px;color:#8e8e8e">Normal</div>
<svg class="ico" style="left:1477px;top:690px" width="8" height="5"><path d="M0.5 0.5L4 4L7.5 0.5" fill="none" stroke="#777" stroke-width="1"/></svg>
<div class="t" style="left:1497px;top:688px;font-size:10px;color:#8e8e8e">Opacité :</div>
<div class="box" style="left:1541px;top:683px;width:53px;height:19px;background:#4a4a4a;border-color:#474747"></div>
<div class="a" style="left:1579px;top:684px;width:1px;height:17px;background:#474747"></div>
<div class="t" style="left:1545px;top:688px;font-size:10px;color:#7a7a7a">100 %</div>
<svg class="ico" style="left:1583px;top:691px" width="8" height="5"><path d="M0.5 0.5L4 4L7.5 0.5" fill="none" stroke="#6a6a6a" stroke-width="1"/></svg>
<div class="a" style="left:1328px;top:705px;width:272px;height:1px;background:#454545"></div>
<div class="t" style="left:1334px;top:716px;font-size:10px;color:#8e8e8e">Verrou :</div>
<svg class="ico" style="left:1380px;top:714px" width="11" height="11"><rect x="0.5" y="0.5" width="10" height="10" fill="none" stroke="#9a9a9a"/><path d="M1 1h3v3H1zM7 1h3v3H7zM4 4h3v3H4zM1 7h3v3H1zM7 7h3v3H7z" fill="#9a9a9a"/></svg>
<svg class="ico" style="left:1402px;top:713px" width="13" height="13"><path d="M12.5 0.5C10 2 7 5 6 7L7 8C9 6.5 11.5 3 12.5 0.5Z" fill="#9a9a9a"/><path d="M5.5 7.5C3.5 7.5 2.5 9 2 10.5C1.8 11.5 1 12 0.5 12.3C3 12.5 6 11.5 6.5 9Z" fill="#9a9a9a"/></svg>
<svg class="ico" style="left:1423px;top:713px" width="13" height="13"><path d="M6.5 1V12M1 6.5H12" stroke="#9a9a9a" stroke-width="1.2"/><path d="M6.5 0L4.5 2.5H8.5ZM6.5 13L4.5 10.5H8.5ZM0 6.5L2.5 4.5V8.5ZM13 6.5L10.5 4.5V8.5Z" fill="#9a9a9a"/></svg>
<svg class="ico" style="left:1445px;top:713px" width="14" height="14"><path d="M3 0V11H14M0 3H11V14" fill="none" stroke="#9a9a9a" stroke-width="1.2" stroke-dasharray="2 1"/></svg>
<svg class="ico" style="left:1468px;top:713px" width="11" height="13"><path d="M2.5 6V4A3 3 0 0 1 8.5 4V6" fill="none" stroke="#9a9a9a" stroke-width="1.4"/><rect x="0.5" y="6" width="10" height="7" fill="#9a9a9a"/></svg>
<div class="t" style="left:1508px;top:716px;font-size:10px;color:#8e8e8e">Fond :</div>
<div class="box" style="left:1541px;top:711px;width:53px;height:19px;background:#4a4a4a;border-color:#474747"></div>
<div class="a" style="left:1579px;top:712px;width:1px;height:17px;background:#474747"></div>
<div class="t" style="left:1545px;top:716px;font-size:10px;color:#7a7a7a">100 %</div>
<svg class="ico" style="left:1583px;top:719px" width="8" height="5"><path d="M0.5 0.5L4 4L7.5 0.5" fill="none" stroke="#6a6a6a" stroke-width="1"/></svg>
<div class="a" style="left:1328px;top:735px;width:272px;height:100px;background:#4d4d4d"></div>
<div class="a" style="left:1358px;top:736px;width:225px;height:30px;background:#6a6a6a"></div>
<svg class="ico" style="left:1336px;top:746px" width="15" height="11"><path d="M0.5 5.5C3 1 12 1 14.5 5.5C12 10 3 10 0.5 5.5Z" fill="#e0e0e0"/><circle cx="7.5" cy="5.5" r="2.8" fill="#4d4d4d"/><circle cx="7.5" cy="5.5" r="1.6" fill="#e0e0e0"/></svg>
<div class="a" style="left:1362px;top:740px;width:32px;height:23px;background:#fff;border:1px solid #2a2a2a"></div>
<svg class="a" style="left:1363px;top:741px" width="30" height="21" viewBox="0 0 1000 667" preserveAspectRatio="none"><use href="#art"/></svg>
<div class="t" style="left:1403px;top:747px;font-size:10px;font-style:italic;color:#f0f0f0">Arrière-plan</div>
<svg class="ico" style="left:1556px;top:745px" width="11" height="14"><path d="M2.5 6V4.5A3 2.8 0 0 1 8.5 4.5V6" fill="none" stroke="#e0e0e0" stroke-width="1.4"/><rect x="0.5" y="6" width="10" height="7.5" fill="none" stroke="#e0e0e0" stroke-width="1.1"/><circle cx="5.5" cy="9.8" r="1.1" fill="#e0e0e0"/></svg>
<div class="a" style="left:1328px;top:834px;width:272px;height:1px;background:#3e3e3e"></div>
<div class="a" style="left:1328px;top:835px;width:272px;height:25px;background:#535353"></div>
<svg class="ico" style="left:1396px;top:842px" width="16" height="10"><path d="M5 1.5H3.5A3.5 3.5 0 0 0 3.5 8.5H5M11 1.5H12.5A3.5 3.5 0 0 1 12.5 8.5H11M5 5H11" fill="none" stroke="#8a8a8a" stroke-width="1.4"/></svg>
<div class="t" style="left:1425px;top:840px;font-size:13px;font-style:italic;color:#8a8a8a;font-family:'Liberation Serif',serif">fx</div>
<svg class="ico" style="left:1450px;top:840px" width="15" height="12"><rect x="0.5" y="0.5" width="14" height="11" fill="#d0d0d0"/><circle cx="7.5" cy="6" r="3" fill="#535353"/></svg>
<svg class="ico" style="left:1478px;top:840px" width="16" height="15"><circle cx="6" cy="6" r="5.2" fill="none" stroke="#d0d0d0" stroke-width="1.2"/><path d="M9.7 2.3A5.2 5.2 0 0 1 2.3 9.7Z" fill="#d0d0d0"/><path d="M10.5 12.5H13.5L12 14Z" fill="#fff"/></svg>
<svg class="ico" style="left:1505px;top:840px" width="14" height="11"><path d="M0 0H5L6 1.5H13V11H0Z" fill="#d0d0d0"/><path d="M0 2.5H13" stroke="#535353" stroke-width=".8"/></svg>
<svg class="ico" style="left:1533px;top:840px" width="13" height="13"><rect x="0.5" y="0.5" width="11.5" height="11.5" fill="none" stroke="#d0d0d0" stroke-width="1.1"/><path d="M6.25 3V9.5M3 6.25H9.5" stroke="#d0d0d0" stroke-width="1.3"/></svg>
<svg class="ico" style="left:1560px;top:840px" width="12" height="14"><path d="M0.5 2.5H11.5M4 2.5V0.8H8V2.5" fill="none" stroke="#8a8a8a" stroke-width="1"/><path d="M1.5 4H10.5V13H1.5Z M4 5V12M6 5V12M8 5V12" fill="none" stroke="#8a8a8a" stroke-width="1"/></svg>

<!-- TASKBAR -->
<div class="a" style="left:0;top:860px;width:1600px;height:40px;background:#dfe4eb"></div>
<svg class="ico" style="left:16px;top:872px" width="17" height="17"><path d="M0 2.3L7 1.3V8H0ZM8 1.2L16.5 0V8H8ZM0 9H7V15.7L0 14.7ZM8 9H16.5V17L8 15.8Z" fill="#111"/></svg>
<div class="a" style="left:48px;top:860px;width:343px;height:40px;background:#ffffff;border:1px solid #c9ccd1;border-bottom:none"></div>
<svg class="ico" style="left:60px;top:872px" width="17" height="17"><circle cx="10.5" cy="6.5" r="5.2" fill="none" stroke="#222" stroke-width="1.5"/><path d="M6.8 10.2L1 16" stroke="#222" stroke-width="1.6"/></svg>
<div class="t" style="left:88px;top:873px;font-size:15px;color:#1a1a1a;letter-spacing:-0.1px">Taper ici pour rechercher</div>
<svg class="ico" style="left:407px;top:871px" width="18" height="18"><circle cx="9" cy="9" r="7" fill="none" stroke="#000" stroke-width="2.3"/></svg>
<svg class="ico" style="left:455px;top:872px" width="18" height="17"><path d="M0.5 1H5M0.5 16H5M3 1V16M3 3H13V14H3" fill="none" stroke="#111" stroke-width="1.5"/><path d="M15 1V5M15 12V16" stroke="#111" stroke-width="1.5"/><rect x="14" y="7" width="3" height="3" fill="#111"/></svg>
<svg class="ico" style="left:504px;top:870px" width="22" height="19"><path d="M0 1H8L10 3H21V18H0Z" fill="#f0b429"/><path d="M0 5H21V18H0Z" fill="#ffd35c"/><path d="M7 18V12H14V18" fill="none" stroke="#0078d4" stroke-width="3"/><path d="M5 12H16" stroke="#0078d4" stroke-width="3"/></svg>
<svg class="ico" style="left:552px;top:870px" width="25" height="22"><g fill="#ffffff"><path d="M6.5 0L12.5 4L6.5 8L0.5 4Z"/><path d="M18.5 0L24.5 4L18.5 8L12.5 4Z"/><path d="M6.5 8L12.5 12L6.5 16L0.5 12Z"/><path d="M18.5 8L24.5 12L18.5 16L12.5 12Z"/><path d="M12.5 13L18.5 17L12.5 21L6.5 17Z"/></g></svg>
<svg class="ico" style="left:601px;top:869px" width="23" height="23" viewBox="0 0 24 24"><path d="M12 12L12 1A11 11 0 0 1 21.5 6.5Z" fill="#ea4335"/><path d="M12 1A11 11 0 0 0 2.5 6.5L7 14Z" fill="#ea4335"/><path d="M2.5 6.5A11 11 0 0 0 11 23L15.5 15L7 14Z" fill="#34a853"/><path d="M21.5 6.5A11 11 0 0 1 11 23L16 14Z" fill="#fbbc04"/><circle cx="12" cy="12" r="5.2" fill="#fff"/><circle cx="12" cy="12" r="4" fill="#4285f4"/></svg>
<div class="a" style="left:593px;top:898px;width:40px;height:2px;background:#0067c0"></div>
<div class="a" style="left:650px;top:868px;width:24px;height:24px;background:#0a8ad6"></div>
<svg class="ico" style="left:654px;top:873px" width="16" height="14"><path d="M3 4V1H10V4M1 4H13V11H1Z M4 7H9M4 9H9" fill="none" stroke="#e6f2fb" stroke-width="1"/><rect x="11" y="5" width="4" height="8" fill="none" stroke="#e6f2fb" stroke-width="1"/></svg>
<div class="a" style="left:687px;top:860px;width:45px;height:40px;background:#f3f5f8"></div>
<div class="a" style="left:700px;top:869px;width:22px;height:22px;background:#001e36;border-radius:4px"></div>
<div class="t" style="left:703px;top:874px;font-size:12px;font-weight:bold;color:#31a8ff;letter-spacing:-0.3px">Ps</div>
<div class="a" style="left:687px;top:898px;width:47px;height:2px;background:#0067c0"></div>
<svg class="ico" style="left:751px;top:867px" width="19" height="25"><rect x="0" y="0" width="19" height="25" rx="1.5" fill="#6b7077"/><rect x="2" y="2" width="15" height="4" fill="#4fc3f7"/><g fill="#e8e8e8"><rect x="2" y="8" width="4" height="4"/><rect x="7.5" y="8" width="4" height="4"/><rect x="13" y="8" width="4" height="4"/><rect x="2" y="13.5" width="4" height="4"/><rect x="7.5" y="13.5" width="4" height="4"/><rect x="2" y="19" width="4" height="4"/><rect x="7.5" y="19" width="4" height="4"/></g><rect x="13" y="13.5" width="4" height="9.5" fill="#1a4f9c"/></svg>
<div class="a" style="left:1046px;top:864px;width:31px;height:31px;border-radius:50%;background:#ffffff"></div>
<div class="a" style="left:1048px;top:866px;width:27px;height:27px;border-radius:50%;background:#0b8ed4"></div>
<div class="t" style="left:1053px;top:868px;font-size:21px;font-weight:bold;color:#fff">?</div>
<svg class="ico" style="left:1125px;top:871px" width="22" height="17"><circle cx="8" cy="7" r="6" fill="#f5b82e"/><path d="M5 15C2 15 1.5 11.5 4 10.5C4.5 7.5 8 6 11 7.5C12.5 5.5 17 6 17.5 9C20.5 9.2 21 14.5 18 15Z" fill="#cfe6f5" stroke="#a8d1ec" stroke-width=".7"/></svg>
<div class="t" style="left:1156px;top:874px;font-size:14px;color:#111">15°C</div>
<div class="t" style="left:1194px;top:874px;font-size:14px;color:#111">Ciel couvert</div>
<svg class="ico" style="left:1282px;top:875px" width="14" height="9"><path d="M1 8L7 2L13 8" fill="none" stroke="#111" stroke-width="1.4"/></svg>
<svg class="ico" style="left:1306px;top:871px" width="13" height="18"><rect x="1.5" y="5" width="7" height="8" rx="1" fill="none" stroke="#111" stroke-width="1.2"/><path d="M8.5 7.5L11.5 5.5V12.5L8.5 10.5" fill="none" stroke="#111" stroke-width="1.2"/><path d="M2 3A5 5 0 0 1 8 2M2 15A5 5 0 0 0 8 16" fill="none" stroke="#111" stroke-width="1"/></svg>
<svg class="ico" style="left:1328px;top:873px" width="18" height="12"><path d="M3 11H15C17.5 11 17.5 7 15 7C14.5 4 11 2 8.5 4C6 2.5 3 4 3.5 7C0.5 7.2 0.5 11 3 11Z" fill="#555"/></svg>
<svg class="ico" style="left:1352px;top:873px" width="18" height="13"><path d="M1 3H4M2.5 1V5M1.5 5H3.5V9" fill="none" stroke="#111" stroke-width="1.2"/><rect x="4.5" y="3.5" width="11" height="7" fill="none" stroke="#111" stroke-width="1.2"/><rect x="6" y="5" width="5" height="4" fill="#111"/><rect x="16" y="5.5" width="1.5" height="3" fill="#111"/></svg>
<svg class="ico" style="left:1379px;top:872px" width="16" height="15"><path d="M1 14A13 13 0 0 1 14 1M4 14A10 10 0 0 1 14 4M7 14A7 7 0 0 1 14 7M10 14A4 4 0 0 1 14 10" fill="none" stroke="#111" stroke-width="1.1"/><circle cx="13" cy="13" r="1.5" fill="#111"/></svg>
<svg class="ico" style="left:1401px;top:873px" width="18" height="14"><path d="M1 5H4L8 1.5V12.5L4 9H1Z" fill="none" stroke="#111" stroke-width="1.2"/><path d="M10.5 4.5A3 3 0 0 1 10.5 9.5M12.5 3A5 5 0 0 1 12.5 11M14.5 1.5A7 7 0 0 1 14.5 12.5" fill="none" stroke="#666" stroke-width="1"/></svg>
<svg class="ico" style="left:1428px;top:871px" width="18" height="18"><path d="M4 15C2 13 2.5 10.5 5 10.5C7 10.5 6 14 3.5 16M5 12L13 2L15.5 4.5L8 13Z M13 2L16.5 3.5M11 8L15 10" fill="none" stroke="#111" stroke-width="1.3"/></svg>
<div class="t" style="left:1460px;top:874px;font-size:12px;color:#111">FRA</div>
<div class="t" style="left:1504px;top:865px;font-size:12px;color:#111">08:59</div>
<div class="t" style="left:1495px;top:882px;font-size:12px;color:#111">19-08-21</div>
<svg class="ico" style="left:1558px;top:871px" width="22" height="22"><path d="M1 1H17V13H6L2 17V13H1Z" fill="#111"/><path d="M4 4H14M4 7H14M4 10H11" stroke="#e3e8f0" stroke-width="1"/><circle cx="15.5" cy="15.5" r="5.8" fill="#d8dce2" stroke="#888" stroke-width="1"/><text x="12.8" y="19.5" font-family="Liberation Sans" font-size="10" fill="#111">3</text></svg>
<div class="a" style="left:1595px;top:860px;width:1px;height:40px;background:#b8bcc2"></div>

</body></html>
